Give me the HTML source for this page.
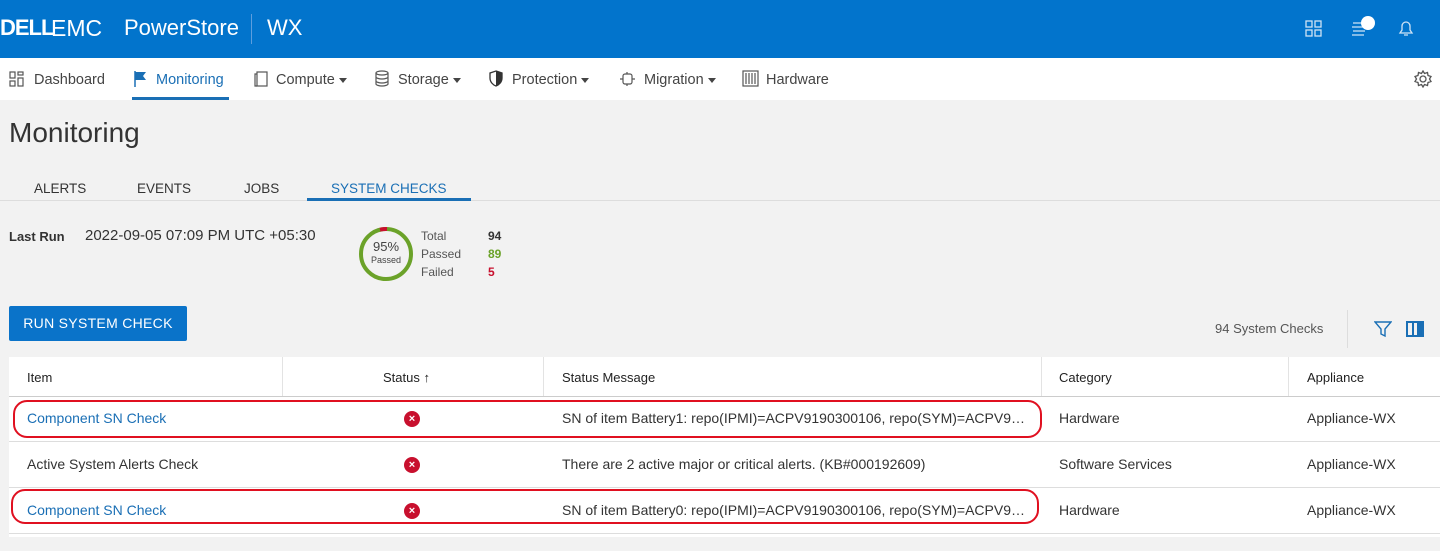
<!DOCTYPE html>
<html><head><meta charset="utf-8"><style>
*{margin:0;padding:0;box-sizing:border-box}
body{width:1440px;height:551px;overflow:hidden;background:#f2f2f2;font-family:"Liberation Sans",sans-serif;color:#333;position:relative}
.a{position:absolute;white-space:nowrap}
.top{position:absolute;left:0;top:0;width:1440px;height:58px;background:#0274cc}
.nav{position:absolute;left:0;top:58px;width:1440px;height:42px;background:#fff}
.nav .a{font-size:14.5px;color:#444;top:14px}
.tri{display:inline-block;width:0;height:0;border-left:4px solid transparent;border-right:4px solid transparent;border-top:5px solid #444;vertical-align:middle;margin-left:4px}
.tab{font-size:13.5px;color:#333;top:181px}
.tbl{position:absolute;left:9px;top:357px;width:1431px;height:180px;background:#fff}
.th{font-size:13px;color:#222;top:370px}
.td{font-size:14px;color:#333}
.lnk{color:#1a6fb5}
.hl{position:absolute;height:1px;background:#ddd;left:9px;width:1431px}
.x{position:absolute;width:16px;height:16px;border-radius:50%;background:#c8102e;color:#fff;font-size:11px;font-weight:bold;text-align:center;line-height:16px}
.oval{position:absolute;border:2px solid #e01020;border-radius:14px}
</style></head><body>
<div class="top"></div>
<div class="a" style="left:0;top:15px;font-size:22px;color:#fff;font-weight:bold;letter-spacing:-1px">DELL</div>
<div class="a" style="left:51px;top:15px;font-size:23px;color:#fff">EMC</div>
<div class="a" style="left:124px;top:15px;font-size:22px;color:#fff">PowerStore</div>
<div class="a" style="left:251px;top:14px;width:1px;height:30px;background:#5d9ede"></div>
<div class="a" style="left:267px;top:15px;font-size:22px;color:#fff">WX</div>
<svg class="a" style="left:1305px;top:20px" width="17" height="17" viewBox="0 0 17 17" fill="none" stroke="#cfe3f5" stroke-width="1.3"><rect x="1" y="1" width="6" height="6"/><rect x="10" y="1" width="6" height="6"/><rect x="1" y="10" width="6" height="6"/><rect x="10" y="10" width="6" height="6"/></svg>
<svg class="a" style="left:1350px;top:15px" width="30" height="24" viewBox="0 0 30 24" fill="none" stroke="#cfe3f5" stroke-width="1.3"><path d="M3 8h12M2 12h12M3 16h12M2 20h12"/><circle cx="18" cy="8" r="7" fill="#fff" stroke="none"/></svg>
<svg class="a" style="left:1397px;top:19px" width="18" height="18" viewBox="0 0 18 18" fill="none" stroke="#cfe3f5" stroke-width="1.3"><path d="M3 14h12l-2-3V7a4 4 0 0 0-8 0v4zM7 16h4"/></svg>
<div class="nav">
<svg class="a" style="left:9px;top:13px" width="16" height="16" viewBox="0 0 16 16" fill="none" stroke="#555" stroke-width="1.2"><rect x="1" y="1" width="5" height="6"/><rect x="9" y="1" width="5" height="3"/><rect x="1" y="10" width="5" height="5"/><rect x="9" y="7" width="5" height="8"/></svg>
<div class="a" style="left:34px">Dashboard</div>
<svg class="a" style="left:133px;top:12px" width="14" height="18" viewBox="0 0 14 18"><path d="M2 1v16" stroke="#1a6fb5" stroke-width="1.5"/><path d="M2 2h11l-3 4 3 4H2z" fill="#1a6fb5"/></svg>
<div class="a" style="left:156px;color:#1a6fb5">Monitoring</div>
<div class="a" style="left:132px;top:39px;width:97px;height:3px;background:#1a6fb5"></div>
<svg class="a" style="left:254px;top:13px" width="14" height="16" viewBox="0 0 14 16" fill="none" stroke="#555" stroke-width="1.2"><rect x="3" y="1" width="10" height="14"/><path d="M3 3H1v12h2"/></svg>
<div class="a" style="left:276px">Compute<span class="tri"></span></div>
<svg class="a" style="left:375px;top:12px" width="14" height="17" viewBox="0 0 14 17" fill="none" stroke="#555" stroke-width="1.2"><ellipse cx="7" cy="3" rx="6" ry="2"/><path d="M1 3v11c0 1 3 2 6 2s6-1 6-2V3M1 7c0 1 3 2 6 2s6-1 6-2M1 11c0 1 3 2 6 2s6-1 6-2"/></svg>
<div class="a" style="left:398px">Storage<span class="tri"></span></div>
<svg class="a" style="left:489px;top:12px" width="14" height="17" viewBox="0 0 14 17"><path d="M7 1l6 2v5c0 4-3 7-6 8-3-1-6-4-6-8V3z" fill="none" stroke="#333" stroke-width="1.3"/><path d="M7 1l6 2v5c0 4-3 7-6 8z" fill="#333"/></svg>
<div class="a" style="left:512px">Protection<span class="tri"></span></div>
<svg class="a" style="left:619px;top:13px" width="17" height="16" viewBox="0 0 17 16" fill="none" stroke="#555" stroke-width="1.2"><rect x="4" y="3" width="9" height="10" rx="2"/><path d="M1 8h3M13 8h3M8 1v2M8 13v2"/></svg>
<div class="a" style="left:644px">Migration<span class="tri"></span></div>
<svg class="a" style="left:742px;top:12px" width="17" height="17" viewBox="0 0 17 17" fill="none" stroke="#555" stroke-width="1.2"><rect x="1" y="1" width="15" height="15"/><path d="M4 3v11M7 3v11M10 3v11M13 3v11"/></svg>
<div class="a" style="left:766px">Hardware</div>
<svg class="a" style="left:1414px;top:12px" width="18" height="18" viewBox="0 0 18 18" fill="none" stroke="#555" stroke-width="1.3"><circle cx="9" cy="9" r="3"/><path d="M9 1l1.5 2.5 3-1 .5 3 3 1-1.5 2.5 1.5 2.5-3 1-.5 3-3-1L9 17l-1.5-2.5-3 1-.5-3-3-1L2.5 9 1 6.5l3-1 .5-3 3 1z"/></svg>
</div>
<div class="a" style="left:9px;top:117px;font-size:28px;color:#333">Monitoring</div>
<div class="a tab" style="left:34px">ALERTS</div>
<div class="a tab" style="left:137px">EVENTS</div>
<div class="a tab" style="left:244px">JOBS</div>
<div class="a tab" style="left:331px;color:#1a6fb5">SYSTEM CHECKS</div>
<div class="a" style="left:0;top:200px;width:1440px;height:1px;background:#ddd"></div>
<div class="a" style="left:307px;top:198px;width:164px;height:3px;background:#1a6fb5"></div>
<div class="a" style="left:9px;top:229px;font-size:13px;font-weight:bold;color:#333">Last Run</div>
<div class="a" style="left:85px;top:227px;font-size:15px;color:#333">2022-09-05 07:09 PM UTC +05:30</div>
<svg class="a" style="left:358px;top:226px" width="56" height="56" viewBox="0 0 56 56"><circle cx="28" cy="28" r="25" fill="none" stroke="#6ba229" stroke-width="4"/><path d="M22 3.7A25 25 0 0 1 29 3" stroke="#c8102e" stroke-width="4" fill="none"/></svg>
<div class="a" style="left:358px;top:239px;width:56px;text-align:center;font-size:13px;color:#444">95%</div>
<div class="a" style="left:358px;top:255px;width:56px;text-align:center;font-size:9px;color:#444">Passed</div>
<div class="a" style="left:421px;top:227px;font-size:12px;color:#555;line-height:18px">Total<br>Passed<br>Failed</div>
<div class="a" style="left:488px;top:227px;font-size:12px;font-weight:bold;line-height:18px"><span style="color:#333">94</span><br><span style="color:#6ba229">89</span><br><span style="color:#c8102e">5</span></div>
<div class="a" style="left:9px;top:306px;width:178px;height:35px;background:#0a73c9;border-radius:2px;color:#fff;font-size:14px;text-align:center;line-height:35px;letter-spacing:.3px">RUN SYSTEM CHECK</div>
<div class="a" style="left:1215px;top:321px;font-size:13px;color:#555">94 System Checks</div>
<div class="a" style="left:1347px;top:310px;width:1px;height:38px;background:#ddd"></div>
<svg class="a" style="left:1374px;top:321px" width="18" height="17" viewBox="0 0 18 17" fill="none" stroke="#1a6fb5" stroke-width="1.4"><path d="M1 1h16l-6 7v7l-4-2V8z"/></svg>
<svg class="a" style="left:1406px;top:321px" width="18" height="16" viewBox="0 0 18 16"><rect x="1" y="1" width="16" height="14" fill="none" stroke="#1a6fb5" stroke-width="2"/><rect x="6" y="1" width="2" height="14" fill="#1a6fb5"/><rect x="11" y="1" width="6" height="14" fill="#1a6fb5"/></svg>
<div class="tbl"></div>
<div class="a" style="left:282px;top:357px;width:1px;height:39px;background:#e3e3e3"></div>
<div class="a" style="left:543px;top:357px;width:1px;height:39px;background:#e3e3e3"></div>
<div class="a" style="left:1041px;top:357px;width:1px;height:39px;background:#e3e3e3"></div>
<div class="a" style="left:1288px;top:357px;width:1px;height:39px;background:#e3e3e3"></div>
<div class="a th" style="left:27px">Item</div>
<div class="a th" style="left:383px">Status &#8593;</div>
<div class="a th" style="left:562px">Status Message</div>
<div class="a th" style="left:1059px">Category</div>
<div class="a th" style="left:1307px">Appliance</div>
<div class="hl" style="top:396px;background:#ccc"></div>
<div class="hl" style="top:441px"></div>
<div class="hl" style="top:487px"></div>
<div class="hl" style="top:533px"></div>
<div class="a td lnk" style="left:27px;top:410px">Component SN Check</div>
<div class="x" style="left:404px;top:411px">×</div>
<div class="a td" style="left:562px;top:410px">SN of item Battery1: repo(IPMI)=ACPV9190300106, repo(SYM)=ACPV9…</div>
<div class="a td" style="left:1059px;top:410px">Hardware</div>
<div class="a td" style="left:1307px;top:410px">Appliance-WX</div>
<div class="a td" style="left:27px;top:456px">Active System Alerts Check</div>
<div class="x" style="left:404px;top:457px">×</div>
<div class="a td" style="left:562px;top:456px">There are 2 active major or critical alerts. (KB#000192609)</div>
<div class="a td" style="left:1059px;top:456px">Software Services</div>
<div class="a td" style="left:1307px;top:456px">Appliance-WX</div>
<div class="a td lnk" style="left:27px;top:502px">Component SN Check</div>
<div class="x" style="left:404px;top:503px">×</div>
<div class="a td" style="left:562px;top:502px">SN of item Battery0: repo(IPMI)=ACPV9190300106, repo(SYM)=ACPV9…</div>
<div class="a td" style="left:1059px;top:502px">Hardware</div>
<div class="a td" style="left:1307px;top:502px">Appliance-WX</div>
<div class="oval" style="left:13px;top:400px;width:1029px;height:38px"></div>
<div class="oval" style="left:11px;top:489px;width:1028px;height:35px"></div>
</body></html>
